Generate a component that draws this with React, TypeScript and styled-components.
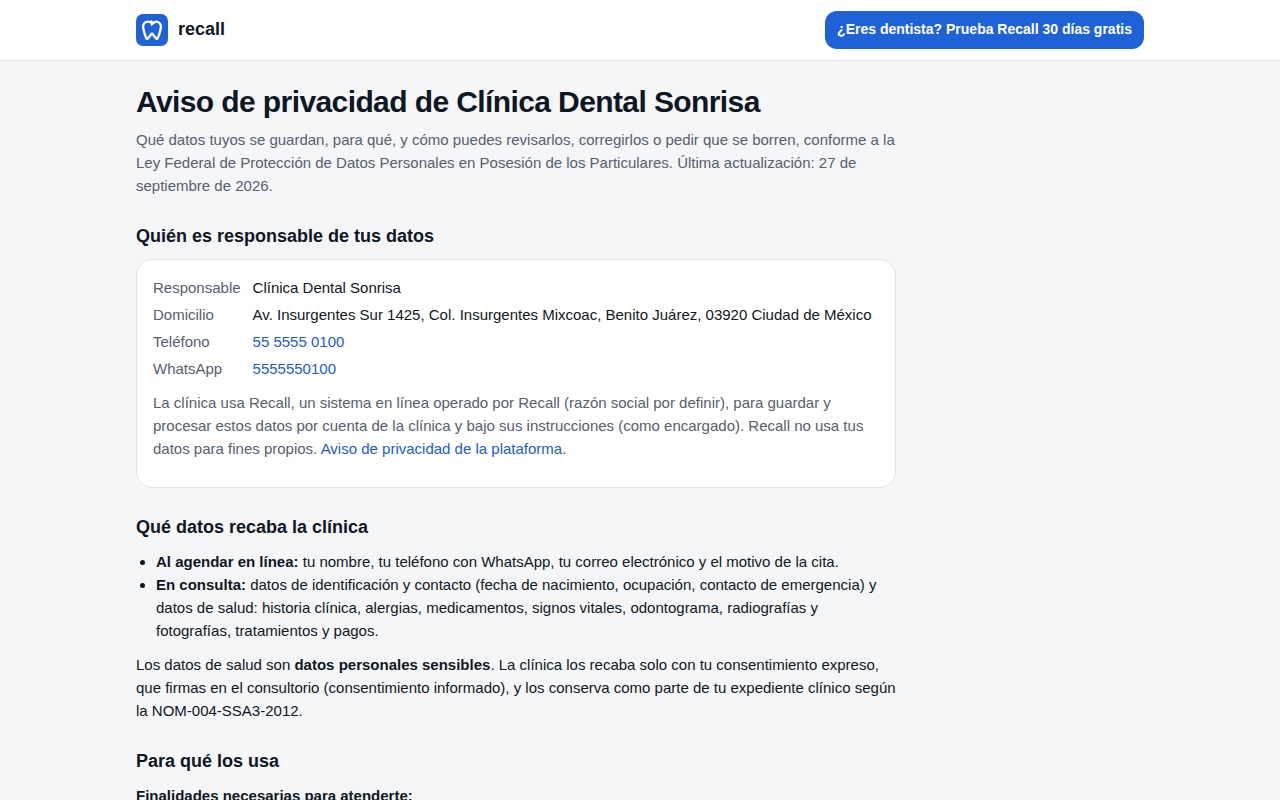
import React from "react";
import styled, { createGlobalStyle } from "styled-components";

const color = {
  ink: "#0f1724",
  muted: "#556070",
  brand: "#1f62d8",
  link: "#215bcf",
  line: "#e2e6eb",
  page: "#f4f6f8",
  surface: "#ffffff",
};

const GlobalStyle = createGlobalStyle`
  *, *::before, *::after { box-sizing: border-box; }
  body {
    margin: 0;
    background: ${color.page};
    color: ${color.ink};
    font-family: "Liberation Sans", Arial, sans-serif;
    font-size: 15px;
    line-height: 23px;
  }
`;

const TopBar = styled.header`
  background: ${color.surface};
  border-bottom: 1px solid ${color.line};
`;

const Container = styled.div`
  max-width: 1040px;
  margin: 0 auto;
  padding: 0 16px;
`;

const TopBarInner = styled(Container)`
  display: flex;
  align-items: center;
  justify-content: space-between;
  gap: 16px;
  min-height: 60px;
`;

const Brand = styled.a`
  display: flex;
  align-items: center;
  gap: 10px;
  color: ${color.ink};
  font-size: 18px;
  font-weight: 700;
  line-height: 28px;
  text-decoration: none;
`;

const BrandName = styled.span`
  padding-bottom: 2px;
`;

const CallToAction = styled.a`
  padding: 8px 12px 9px;
  border-radius: 12px;
  background: ${color.brand};
  color: #fff;
  font-size: 14px;
  font-weight: 700;
  line-height: 21px;
  text-decoration: none;
`;

const Article = styled.main`
  max-width: 760px;
  padding: 24px 0 48px;
`;

const Title = styled.h1`
  margin: 0 0 9px;
  font-size: 30px;
  line-height: 34px;
  letter-spacing: -0.02em;
`;

const Heading = styled.h2`
  margin: 27px 0 11px;
  font-size: 18px;
  line-height: 24px;
`;

const Paragraph = styled.p<{ $muted?: boolean }>`
  margin: 0 0 11px;
  color: ${(p) => (p.$muted ? color.muted : color.ink)};
`;

const Lead = styled(Paragraph)`
  margin: 0;
`;

const Card = styled.div`
  padding: 16px;
  border: 1px solid ${color.line};
  border-radius: 16px;
  background: ${color.surface};
`;

const Details = styled.dl`
  display: grid;
  grid-template-columns: auto 1fr;
  gap: 4px 12px;
  margin: 0 0 11px;
`;

const Term = styled.dt`
  color: ${color.muted};
`;

const Value = styled.dd`
  margin: 0;
`;

const Link = styled.a`
  color: ${color.link};
  text-decoration: none;
`;

const List = styled.ul`
  margin: 0 0 11px;
  padding-left: 20px;
`;

function ToothLogo() {
  return (
    <svg width="32" height="32" viewBox="0 0 32 32" aria-hidden="true">
      <rect width="32" height="32" rx="7" fill={color.brand} />
      <g fill="none" stroke="#fff" strokeWidth="2.3" strokeLinecap="round" strokeLinejoin="round">
        <path d="M16 9C14 7.7 11.8 7.2 10 8C7.3 9.2 6.6 12.2 7.5 15.4C8.2 18.4 9.2 21.8 10.2 24C10.6 25.1 11.8 25.1 12.3 24.1L15.2 20.2C15.6 19.6 16.4 19.6 16.8 20.2L19.7 24.1C20.2 25.1 21.4 25.1 21.8 24C22.8 21.8 23.8 18.4 24.5 15.4C25.4 12.2 24.7 9.2 22 8C20.9 7.5 19.8 7.6 18.4 8.2" />
      </g>
      <path
        d="M15.2 6.4L18.8 9L15.2 11.6Z"
        fill="#fff"
        stroke="#fff"
        strokeWidth="1"
        strokeLinejoin="round"
      />
    </svg>
  );
}

export default function App() {
  return (
    <>
      <GlobalStyle />
      <TopBar>
        <TopBarInner>
          <Brand href="#">
            <ToothLogo />
            <BrandName>recall</BrandName>
          </Brand>
          <CallToAction href="#">¿Eres dentista? Prueba Recall 30 días gratis</CallToAction>
        </TopBarInner>
      </TopBar>
      <Container>
        <Article>
          <Title>Aviso de privacidad de Clínica Dental Sonrisa</Title>
          <Lead $muted>
            Qué datos tuyos se guardan, para qué, y cómo puedes revisarlos, corregirlos o pedir que
            se borren, conforme a la Ley Federal de Protección de Datos Personales en Posesión de
            los Particulares. Última actualización: 27 de septiembre de 2026.
          </Lead>

          <Heading>Quién es responsable de tus datos</Heading>
          <Card>
            <Details>
              <Term>Responsable</Term>
              <Value>Clínica Dental Sonrisa</Value>
              <Term>Domicilio</Term>
              <Value>
                Av. Insurgentes Sur 1425, Col. Insurgentes Mixcoac, Benito Juárez, 03920 Ciudad de
                México
              </Value>
              <Term>Teléfono</Term>
              <Value>
                <Link href="tel:5555550100">55 5555 0100</Link>
              </Value>
              <Term>WhatsApp</Term>
              <Value>
                <Link href="#whatsapp">5555550100</Link>
              </Value>
            </Details>
            <Paragraph $muted>
              La clínica usa Recall, un sistema en línea operado por Recall (razón social por
              definir), para guardar y procesar estos datos por cuenta de la clínica y bajo sus
              instrucciones (como encargado). Recall no usa tus datos para fines propios.{" "}
              <Link href="#plataforma">Aviso de privacidad de la plataforma</Link>.
            </Paragraph>
          </Card>

          <Heading>Qué datos recaba la clínica</Heading>
          <List>
            <li>
              <strong>Al agendar en línea:</strong> tu nombre, tu teléfono con WhatsApp, tu correo
              electrónico y el motivo de la cita.
            </li>
            <li>
              <strong>En consulta:</strong> datos de identificación y contacto (fecha de
              nacimiento, ocupación, contacto de emergencia) y datos de salud: historia clínica,
              alergias, medicamentos, signos vitales, odontograma, radiografías y fotografías,
              tratamientos y pagos.
            </li>
          </List>
          <Paragraph>
            Los datos de salud son <strong>datos personales sensibles</strong>. La clínica los
            recaba solo con tu consentimiento expreso, que firmas en el consultorio
            (consentimiento informado), y los conserva como parte de tu expediente clínico según la
            NOM-004-SSA3-2012.
          </Paragraph>

          <Heading>Para qué los usa</Heading>
          <Paragraph>
            <strong>Finalidades necesarias para atenderte:</strong>
          </Paragraph>
        </Article>
      </Container>
    </>
  );
}
